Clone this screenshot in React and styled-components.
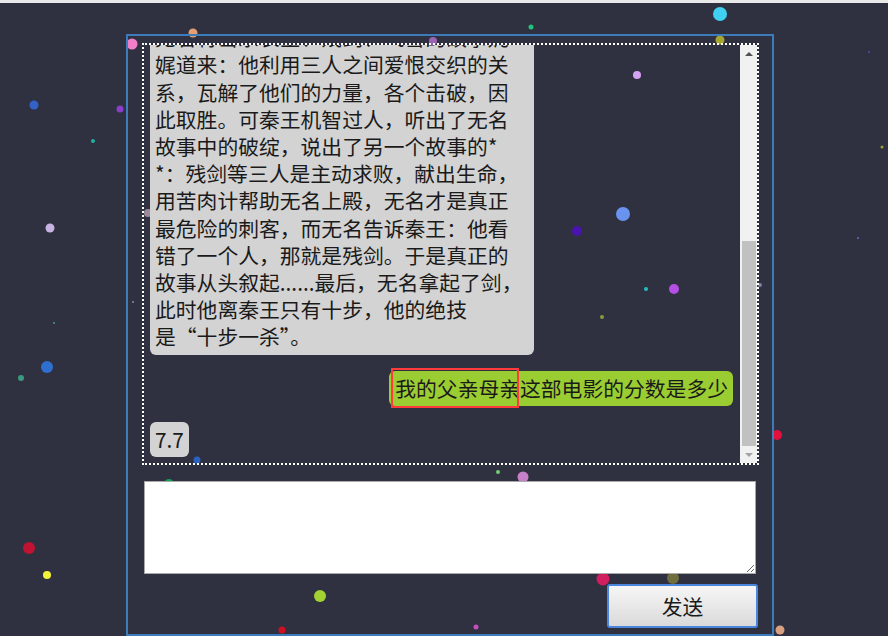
import styled, { createGlobalStyle } from "styled-components";

const GlobalStyle = createGlobalStyle`
  body {
    margin: 0;
    background: #2f3140;
    font-family: "Noto Sans CJK SC", "Noto Sans", sans-serif;
    color: #1a1a1a;
  }
`;

const Page = styled.div`
  position: relative;
  height: 636px;
  overflow: hidden;
`;

const TopStrip = styled.div`
  height: 3px;
  background: #e9e9e9;
`;

const Particles = styled.svg`
  position: absolute;
  left: 0;
  top: 0;
  z-index: 0;
`;

const ChatBox = styled.div`
  position: relative;
  z-index: 1;
  box-sizing: border-box;
  width: 648px;
  height: 602px;
  margin: 31px 0 0 126px;
  padding: 7px 13px 0 14px;
  border: 2px solid #3c7cba;
`;

const Frame = styled.div`
  display: flex;
  box-sizing: border-box;
  height: 422px;
  border: 2px dotted #ffffff;
`;

const Messages = styled.div`
  flex: 1;
  display: flex;
  flex-direction: column;
  justify-content: flex-end;
  gap: 16px;
  overflow: hidden;
  padding: 0 7px 6px 6px;
`;

const Bubble = styled.div`
  align-self: ${(p) => (p.$mine ? "flex-end" : "flex-start")};
  background: ${(p) => (p.$mine ? "#9acd32" : "#d3d3d3")};
  border-radius: 6px;
  padding: ${(p) => (p.$mine ? "4px 5px 4px 6px" : "4px 5px")};
  font-size: 20.8px;
  line-height: 27.2px;
  white-space: nowrap;
`;

const StoryBubble = styled(Bubble)`
  box-sizing: border-box;
  width: 384px;
`;

const Line = styled.span`
  display: block;
`;

const Highlight = styled.span`
  position: relative;

  &::after {
    content: "";
    position: absolute;
    top: -5px;
    bottom: -5px;
    left: -4px;
    right: 1px;
    border: 2px solid #ff3b3b;
  }
`;

const Scrollbar = styled.div`
  width: 17px;
  display: flex;
  flex-direction: column;
  background: #f1f1f1;
`;

const ScrollButton = styled.div`
  height: 17px;
  display: flex;
  align-items: center;
  justify-content: center;

  &::before {
    content: "";
    border-left: 4px solid transparent;
    border-right: 4px solid transparent;
    ${(p) =>
      p.$down
        ? "border-top: 4px solid #a3a3a3;"
        : "border-bottom: 4px solid #505050;"}
  }
`;

const Track = styled.div`
  flex: 1;
  display: flex;
  flex-direction: column;
  justify-content: flex-end;
`;

const Thumb = styled.div`
  height: 205px;
  margin: 0 1px 0 2px;
  background: #c1c1c1;
`;

const Input = styled.textarea`
  display: block;
  box-sizing: border-box;
  width: 612px;
  height: 93px;
  margin: 16px 0 0 2px;
  border: 1px solid #a9a9a9;
  background: #fff;
  font-family: inherit;
`;

const SendButton = styled.button`
  display: block;
  box-sizing: border-box;
  width: 151px;
  height: 44px;
  margin: 10px 1px 0 auto;
  border: 2px solid #4a86de;
  border-radius: 3px;
  background: linear-gradient(#f6f6f6, #dadada);
  font-family: inherit;
  font-size: 20.8px;
  color: #1a1a1a;
  cursor: pointer;
`;

const dots = [
  [720, 14, 7, "#3fd0f2"],
  [531, 27, 2.5, "#22c37a"],
  [193, 33, 4.5, "#e6a070"],
  [132, 44, 5.5, "#f07ec8"],
  [720, 40, 4.5, "#a5a630"],
  [433, 41, 4, "#9a64b4"],
  [637, 75, 4, "#d6a2f2"],
  [869, 52, 1, "#4050c0"],
  [34, 105, 4.5, "#3362c6"],
  [120, 109, 3.5, "#8a3ec8"],
  [93, 141, 2, "#20b0a0"],
  [882, 147, 1.5, "#a0a030"],
  [623, 214, 7, "#6a93f0"],
  [50, 228, 4.5, "#c8b2e2"],
  [148, 213, 4, "#9a8a9a"],
  [577, 231, 5, "#4a14b0"],
  [858, 238, 1, "#6070c0"],
  [760, 285, 2, "#8080a0"],
  [674, 289, 5, "#b54ee2"],
  [646, 289, 2, "#20c0c0"],
  [602, 317, 2, "#80a040"],
  [133, 302, 1, "#8090a0"],
  [54, 323, 1, "#40a080"],
  [47, 367, 6, "#2f6fd0"],
  [21, 378, 3, "#3a9a80"],
  [777, 435, 5, "#e3103e"],
  [197, 460, 3.5, "#2a62c0"],
  [498, 472, 2, "#70d070"],
  [523, 477, 5.5, "#c880c8"],
  [169, 484, 5, "#10a050"],
  [29, 548, 6, "#c01232"],
  [47, 575, 4, "#f2f23a"],
  [603, 579, 6.5, "#d01e5e"],
  [673, 578, 6, "#6e6e3e"],
  [320, 596, 6, "#a2d232"],
  [282, 630, 3.5, "#d01020"],
  [476, 627, 2.5, "#c050c0"],
  [780, 630, 4.5, "#d8a080"],
];

const storyLines = [
  "无名将击杀长空、残剑、飞雪的故事娓",
  "娓道来：他利用三人之间爱恨交织的关",
  "系，瓦解了他们的力量，各个击破，因",
  "此取胜。可秦王机智过人，听出了无名",
  "故事中的破绽，说出了另一个故事的*",
  "*：残剑等三人是主动求败，献出生命，",
  "用苦肉计帮助无名上殿，无名才是真正",
  "最危险的刺客，而无名告诉秦王：他看",
  "错了一个人，那就是残剑。于是真正的",
  "故事从头叙起......最后，无名拿起了剑，",
  "此时他离秦王只有十步，他的绝技",
  "是“十步一杀”。",
];

export default function App() {
  return (
    <Page>
      <GlobalStyle />
      <TopStrip />
      <Particles width="888" height="636">
        {dots.map(([x, y, r, c], i) => (
          <circle key={i} cx={x} cy={y} r={r} fill={c} />
        ))}
      </Particles>
      <ChatBox>
        <Frame>
          <Messages>
            <StoryBubble>
              {storyLines.map((line, i) => (
                <Line key={i}>{line}</Line>
              ))}
            </StoryBubble>
            <Bubble $mine>
              <Highlight>我的父亲母亲</Highlight>这部电影的分数是多少
            </Bubble>
            <Bubble>7.7</Bubble>
          </Messages>
          <Scrollbar>
            <ScrollButton />
            <Track>
              <Thumb />
            </Track>
            <ScrollButton $down />
          </Scrollbar>
        </Frame>
        <Input />
        <SendButton>发送</SendButton>
      </ChatBox>
    </Page>
  );
}
